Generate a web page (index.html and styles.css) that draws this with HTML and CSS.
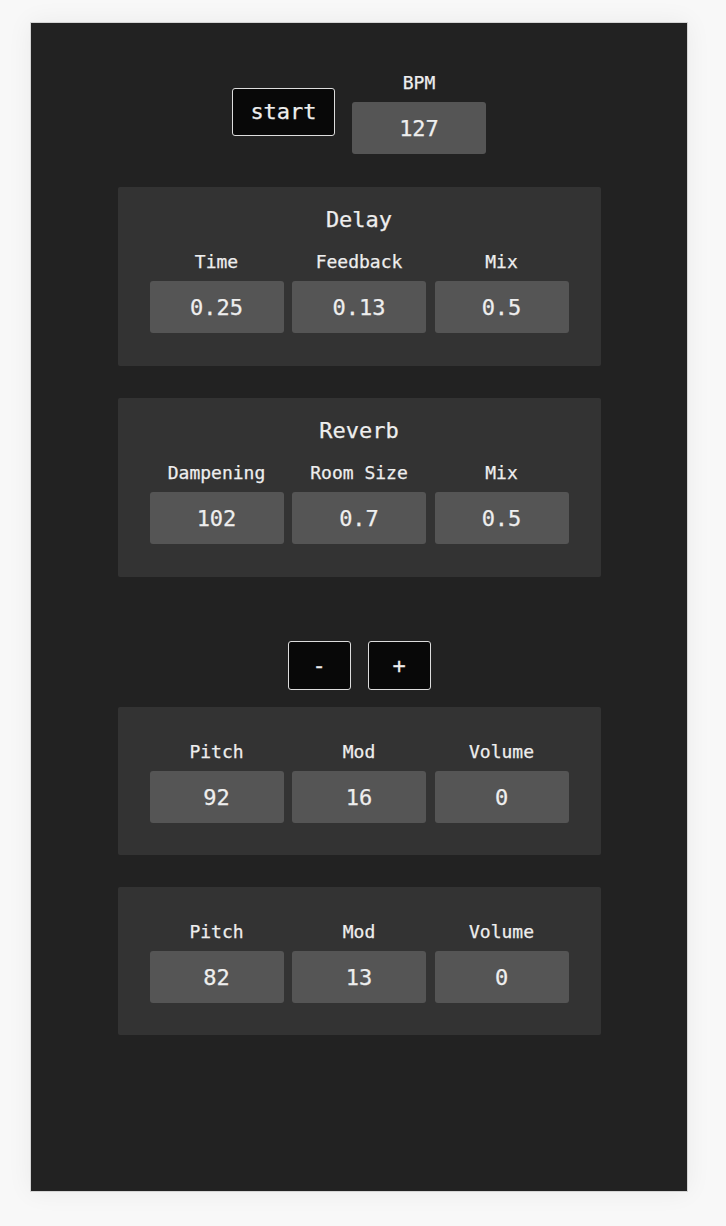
FILE: index.html
```html
<!DOCTYPE html>
<html>
<head>
<meta charset="utf-8">
<link rel="stylesheet" href="styles.css">
</head>
<body>
<div class="panel">
  <div class="transport">
    <button class="btn btn-start">start</button>
    <div class="field bpm">
      <div class="label">BPM</div>
      <div class="value">127</div>
    </div>
  </div>

  <section class="card fx">
    <h2 class="title">Delay</h2>
    <div class="grid">
      <div class="field"><div class="label">Time</div><div class="value">0.25</div></div>
      <div class="field"><div class="label">Feedback</div><div class="value">0.13</div></div>
      <div class="field"><div class="label">Mix</div><div class="value">0.5</div></div>
    </div>
  </section>

  <section class="card fx">
    <h2 class="title">Reverb</h2>
    <div class="grid">
      <div class="field"><div class="label">Dampening</div><div class="value">102</div></div>
      <div class="field"><div class="label">Room Size</div><div class="value">0.7</div></div>
      <div class="field"><div class="label">Mix</div><div class="value">0.5</div></div>
    </div>
  </section>

  <div class="voice-controls">
    <button class="btn btn-small">-</button>
    <button class="btn btn-small">+</button>
  </div>

  <section class="card voice">
    <div class="grid">
      <div class="field"><div class="label">Pitch</div><div class="value">92</div></div>
      <div class="field"><div class="label">Mod</div><div class="value">16</div></div>
      <div class="field"><div class="label">Volume</div><div class="value">0</div></div>
    </div>
  </section>

  <section class="card voice">
    <div class="grid">
      <div class="field"><div class="label">Pitch</div><div class="value">82</div></div>
      <div class="field"><div class="label">Mod</div><div class="value">13</div></div>
      <div class="field"><div class="label">Volume</div><div class="value">0</div></div>
    </div>
  </section>
</div>
</body>
</html>
```

FILE: styles.css
```css
html, body {
  margin: 0;
  padding: 0;
  background: #f8f8f8;
}

body {
  font-family: "DejaVu Sans Mono", "Liberation Mono", monospace;
  color: #eeeeee;
  padding-top: 22px;
  height: 1226px;
  box-sizing: border-box;
  -webkit-text-stroke: 0.25px #eeeeee;
}

.panel {
  margin-left: 30px;
  width: 658px;
  height: 1170px;
  box-sizing: border-box;
  background: #222222;
  border: 1px solid #d4d4d4;
  box-shadow: 0 0 24px rgba(0, 0, 0, 0.06);
  padding-top: 50px;
  display: flex;
  flex-direction: column;
  align-items: center;
}

.transport {
  display: flex;
  align-items: flex-start;
  gap: 17px;
}

.btn {
  font-family: inherit;
  background: #080808;
  color: #eeeeee;
  border: 1px solid #dddddd;
  border-radius: 3px;
  padding: 0;
  font-size: 22px;
  line-height: 1;
  cursor: pointer;
  -webkit-text-stroke: 0.25px #eeeeee;
}

.btn-start {
  width: 103px;
  height: 48px;
  margin-top: 15px;
}

.field {
  display: flex;
  flex-direction: column;
  align-items: center;
  gap: 9px;
}

.bpm {
  width: 134px;
  gap: 9px;
}

.label {
  font-size: 18px;
  line-height: 20px;
  height: 20px;
  white-space: nowrap;
}

.value {
  width: 100%;
  height: 52px;
  background: #555555;
  border-radius: 3px;
  font-size: 22px;
  display: flex;
  align-items: center;
  justify-content: center;
}

.card {
  width: 483px;
  box-sizing: border-box;
  background: #333333;
  border-radius: 2px;
  padding: 0 32px 33px;
}

.fx {
  margin-top: 32px;
  padding-top: 20px;
}

.transport + .fx {
  margin-top: 33px;
}

.title {
  margin: 0 0 19px;
  text-align: center;
  font-size: 22px;
  line-height: 26px;
  font-weight: normal;
}

.grid {
  display: grid;
  grid-template-columns: repeat(3, 1fr);
  column-gap: 8.5px;
}

.voice-controls {
  display: flex;
  gap: 17px;
  margin-top: 64px;
}

.btn-small {
  width: 63px;
  height: 49px;
}

.voice {
  padding-top: 35px;
  padding-bottom: 32px;
  margin-top: 32px;
}

.voice-controls + .voice {
  margin-top: 17px;
}
```
